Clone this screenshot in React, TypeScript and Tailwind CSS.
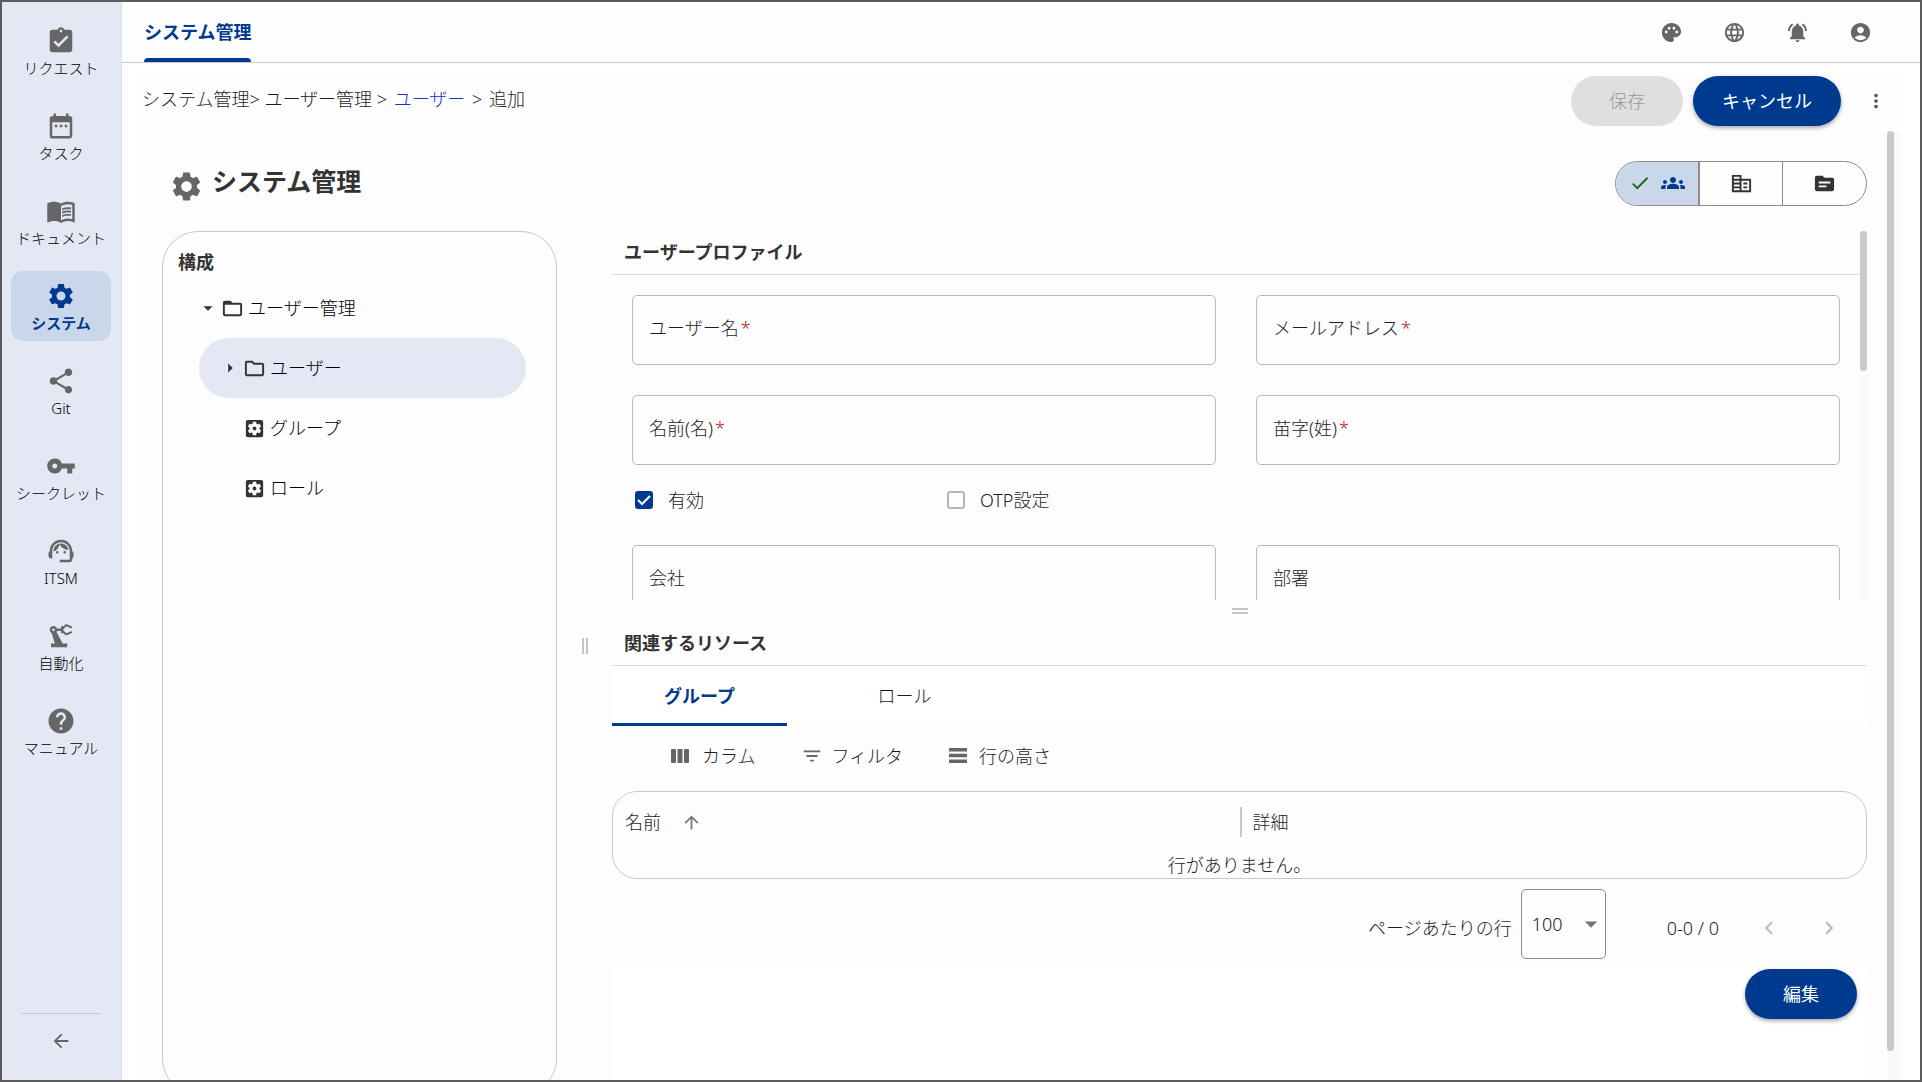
import { useState, type ComponentType, type ReactNode } from "react";
import {
  MdAccountCircle,
  MdArrowBack,
  MdArrowDropDown,
  MdArrowRight,
  MdArrowUpward,
  MdAssignmentTurnedIn,
  MdCheck,
  MdChevronLeft,
  MdChevronRight,
  MdCorporateFare,
  MdDateRange,
  MdFilterList,
  MdFolderOpen,
  MdGroups,
  MdHelp,
  MdLanguage,
  MdMenuBook,
  MdMoreVert,
  MdNotificationsActive,
  MdOutlineFolder,
  MdPalette,
  MdPrecisionManufacturing,
  MdSettings,
  MdSettingsApplications,
  MdShare,
  MdSource,
  MdSupportAgent,
  MdVpnKey,
} from "react-icons/md";

type Icon = ComponentType<{ size?: number; className?: string }>;

const navItems: { label: string; icon: Icon; active?: boolean }[] = [
  { label: "リクエスト", icon: MdAssignmentTurnedIn },
  { label: "タスク", icon: MdDateRange },
  { label: "ドキュメント", icon: MdMenuBook },
  { label: "システム", icon: MdSettings, active: true },
  { label: "Git", icon: MdShare },
  { label: "シークレット", icon: MdVpnKey },
  { label: "ITSM", icon: MdSupportAgent },
  { label: "自動化", icon: MdPrecisionManufacturing },
  { label: "マニュアル", icon: MdHelp },
];

function Sidebar() {
  return (
    <nav className="flex w-30 shrink-0 flex-col items-center border-r border-[#dcdde2] bg-[#e4e8f4] pt-3.5 pr-px">
      <div className="flex flex-col gap-[15px]">
        {navItems.map(({ label, icon: IconC, active }) => (
          <a
            key={label}
            href="#"
            className={
              active
                ? "flex h-[70px] w-[100px] flex-col items-center rounded-xl bg-[#cad7ea] pt-2.5 font-bold text-[#003a8f]"
                : "flex h-[70px] w-[100px] flex-col items-center pt-2.5 text-black"
            }
          >
            <IconC size={30} className={active ? "shrink-0" : "shrink-0 text-[#666]"} />
            <span className="text-[15px] leading-6 whitespace-nowrap">{label}</span>
          </a>
        ))}
      </div>
      <div className="mt-auto flex w-20 justify-center border-t border-[#c6cad5] pt-4 pb-7">
        <button aria-label="折りたたむ" className="text-[#666]">
          <MdArrowBack size={22} />
        </button>
      </div>
    </nav>
  );
}

function Header() {
  const icons: [string, Icon][] = [
    ["テーマ", MdPalette],
    ["言語", MdLanguage],
    ["通知", MdNotificationsActive],
    ["アカウント", MdAccountCircle],
  ];
  return (
    <header className="flex h-[61px] shrink-0 items-stretch justify-between border-b border-[#c8c8c8] bg-[#fdfdfd] pr-12 pl-[22px]">
      <a href="#" className="flex flex-col text-lg font-bold text-[#003a8f]">
        <span className="flex grow items-center pt-1">システム管理</span>
        <span className="h-1 rounded-t-sm bg-[#003a8f]" />
      </a>
      <div className="flex items-center gap-10 text-[#666]">
        {icons.map(([name, IconC]) => (
          <button key={name} aria-label={name}>
            <IconC size={23} />
          </button>
        ))}
      </div>
    </header>
  );
}

function PrimaryButton({ children, className }: { children: ReactNode; className: string }) {
  return (
    <button
      className={`h-[50px] rounded-full bg-[#003a8f] text-lg font-normal text-white shadow-[0_2px_4px_rgba(0,0,0,0.35)] ${className}`}
    >
      {children}
    </button>
  );
}

function ActionBar() {
  return (
    <div className="flex h-[54px] shrink-0 items-center justify-between bg-[#fdfdfd] pr-3.5">
      <nav aria-label="breadcrumb" className="flex items-center gap-0.5 pb-1 text-lg whitespace-pre text-[#1c1c1c]">
        <span>システム管理&gt; ユーザー管理 &gt; </span>
        <a href="#" className="text-[#1a30c8]">
          ユーザー
        </a>
        <span> &gt; </span>
        <span>追加</span>
      </nav>
      <div className="flex items-center">
        <button disabled className="h-[50px] w-28 rounded-full bg-[#dfdfdf] text-lg text-[#999]">
          保存
        </button>
        <PrimaryButton className="ml-2.5 w-37">キャンセル</PrimaryButton>
        <button aria-label="その他" className="ml-6 text-[#555]">
          <MdMoreVert size={22} />
        </button>
      </div>
    </div>
  );
}

function ViewToggle() {
  return (
    <div className="flex h-[45px] overflow-hidden rounded-full border border-[#8c8c8c] text-[#333]">
      <button
        aria-label="グループ表示"
        aria-pressed="true"
        className="flex w-[84px] items-center justify-center gap-2.5 border-r-2 border-[#8c8c8c] bg-[#cad7ea]"
      >
        <MdCheck size={22} className="text-[#1f6b0a]" />
        <MdGroups size={24} className="text-[#003a8f]" />
      </button>
      <button aria-label="組織表示" className="flex w-[82px] items-center justify-center">
        <MdCorporateFare size={23} />
      </button>
      <button
        aria-label="リソース表示"
        className="flex w-[84px] items-center justify-center border-l border-[#8c8c8c]"
      >
        <MdSource size={23} />
      </button>
    </div>
  );
}

function TreeItem({
  label,
  icon: IconC,
  arrow: Arrow,
  nested,
  selected,
}: {
  label: string;
  icon: Icon;
  arrow?: Icon;
  nested?: boolean;
  selected?: boolean;
}) {
  return (
    <button
      className={`flex h-[60px] w-full items-center rounded-full text-lg text-black ${nested ? "pl-[22px]" : ""} ${selected ? "bg-[#e4e8f4]" : ""}`}
    >
      <span className="flex w-[18px] justify-center text-[#333]">
        {Arrow && <Arrow size={22} className="shrink-0" />}
      </span>
      <IconC size={23} className="mx-1 shrink-0 text-[#333]" />
      <span>{label}</span>
    </button>
  );
}

function TreePanel() {
  return (
    <aside className="h-[864px] w-[395px] shrink-0 rounded-[36px] border border-[#c8c8c8] pt-3.5 pr-[30px]">
      <h2 className="pl-[15px] text-lg leading-8 font-bold text-[#333]">構成</h2>
      <ul className="pl-9">
        <li>
          <TreeItem label="ユーザー管理" icon={MdFolderOpen} arrow={MdArrowDropDown} />
          <ul>
            <li>
              <TreeItem label="ユーザー" icon={MdOutlineFolder} arrow={MdArrowRight} nested selected />
            </li>
            <li>
              <TreeItem label="グループ" icon={MdSettingsApplications} nested />
            </li>
            <li>
              <TreeItem label="ロール" icon={MdSettingsApplications} nested />
            </li>
          </ul>
        </li>
      </ul>
    </aside>
  );
}

function Field({ id, label, required }: { id: string; label: string; required?: boolean }) {
  return (
    <div className="relative">
      <input id={id} required={required} className="h-[70px] w-full rounded-[5px] border border-[#b8b8b8] px-4 text-lg" />
      <label htmlFor={id} className="absolute top-[19px] left-[17px] text-lg leading-7 text-[#1c1c1c]">
        {label}
        {required && <span className="ml-0.5 text-[#b71c1c]">*</span>}
      </label>
    </div>
  );
}

function Checkbox({ id, label, defaultChecked }: { id: string; label: string; defaultChecked?: boolean }) {
  return (
    <label htmlFor={id} className="flex items-center gap-[15px] text-lg text-[#1c1c1c]">
      <span className="grid">
        <input
          id={id}
          type="checkbox"
          defaultChecked={defaultChecked}
          className="peer col-start-1 row-start-1 size-[18px] appearance-none rounded-[3px] border-2 border-[#b5b5b5] checked:border-[#003a8f] checked:bg-[#003a8f]"
        />
        <svg
          viewBox="0 0 18 18"
          className="pointer-events-none invisible col-start-1 row-start-1 size-[18px] peer-checked:visible"
          fill="none"
          stroke="#fff"
          strokeWidth="2"
        >
          <path d="M3 9l4 4 8-8" />
        </svg>
      </span>
      {label}
    </label>
  );
}

function ProfileForm() {
  return (
    <section className="flex h-[369px] overflow-hidden">
      <div className="min-w-0 grow">
        <h2 className="flex h-11 items-center border-b border-[#dcdcdc] pb-0.5 pl-3 text-lg font-bold text-[#333]">
          ユーザープロファイル
        </h2>
        <div className="grid grid-cols-2 gap-x-10 px-5 pt-5">
          <Field id="username" label="ユーザー名" required />
          <Field id="email" label="メールアドレス" required />
          <div className="mt-[30px]">
            <Field id="given-name" label="名前(名)" required />
          </div>
          <div className="mt-[30px]">
            <Field id="family-name" label="苗字(姓)" required />
          </div>
          <div className="col-span-2 grid h-20 grid-cols-4 pb-[10px]">
            <div className="flex items-center pl-[3px]">
              <Checkbox id="enabled" label="有効" defaultChecked />
            </div>
            <div className="flex items-center pl-[13px]">
              <Checkbox id="otp" label="OTP設定" />
            </div>
          </div>
          <Field id="company" label="会社" />
          <Field id="department" label="部署" />
        </div>
      </div>
      <div className="w-[7px] shrink-0 bg-[#fafafa]">
        <div className="h-[140px] rounded-full bg-[#c9c9c9]" />
      </div>
    </section>
  );
}

function ColumnsIcon() {
  return (
    <svg viewBox="0 0 18 14" className="h-3.5 w-[18px]" fill="#666">
      <rect width="5" height="14" rx="1" />
      <rect x="6.5" width="5" height="14" rx="1" />
      <rect x="13" width="5" height="14" rx="1" />
    </svg>
  );
}

function RowsIcon() {
  return (
    <svg viewBox="0 0 18 15" className="h-[15px] w-[18px]" fill="#666">
      <rect width="18" height="3.5" />
      <rect y="5.75" width="18" height="3.5" />
      <rect y="11.5" width="18" height="3.5" />
    </svg>
  );
}

function ResourceTable() {
  return (
    <div className="overflow-hidden rounded-[25px] border border-[#c8c8c8]">
      <table className="w-full table-fixed text-lg text-[#1c1c1c]">
        <thead>
          <tr className="h-[60px]">
            <th className="px-3 text-left font-light" aria-sort="ascending">
              <span className="flex items-center gap-5">
                名前
                <MdArrowUpward size={21} className="text-[#777]" />
              </span>
            </th>
            <th className="text-left font-light">
              <span className="flex h-[30px] items-center border-l-2 border-[#c8c8c8] pl-[11px]">詳細</span>
            </th>
          </tr>
        </thead>
        <tbody>
          <tr>
            <td colSpan={2} className="h-[26px] p-0 text-center leading-[26px]">
              行がありません。
            </td>
          </tr>
        </tbody>
      </table>
    </div>
  );
}

function Pagination() {
  return (
    <div className="flex items-center justify-end pt-2.5 pr-[25px] pb-2.5 text-lg text-[#1c1c1c]">
      <label htmlFor="page-size" className="pt-2">
        ページあたりの行
      </label>
      <div className="relative ml-[9px]">
        <select
          id="page-size"
          defaultValue="100"
          className="h-[70px] w-[85px] appearance-none rounded-[5px] border border-[#8c8c8c] pl-2.5"
        >
          <option>25</option>
          <option>50</option>
          <option>100</option>
        </select>
        <MdArrowDropDown size={30} className="pointer-events-none absolute top-5 right-0 text-[#757575]" />
      </div>
      <span className="ml-[61px] pt-2">0-0 / 0</span>
      <button aria-label="前のページ" disabled className="ml-[37px] pt-2 text-[#bdbdbd]">
        <MdChevronLeft size={26} />
      </button>
      <button aria-label="次のページ" disabled className="ml-[34px] pt-2 text-[#bdbdbd]">
        <MdChevronRight size={26} />
      </button>
    </div>
  );
}

function Resources() {
  const [tab, setTab] = useState(0);
  return (
    <section className="flex grow flex-col">
      <h2 className="flex h-[45px] items-center border-b border-[#dcdcdc] pl-3 text-lg font-bold text-[#333]">
        関連するリソース
      </h2>
      <div role="tablist" className="flex h-15 gap-[30px] bg-white text-lg">
        {["グループ", "ロール"].map((name, i) => (
          <button
            key={name}
            role="tab"
            aria-selected={tab === i}
            onClick={() => setTab(i)}
            className={
              tab === i
                ? "w-[175px] border-b-3 border-[#003a8f] pt-0.5 font-bold text-[#003a8f]"
                : "w-[175px] border-b-3 border-transparent pt-0.5 text-[#1c1c1c]"
            }
          >
            {name}
          </button>
        ))}
      </div>
      <div className="flex h-[65px] items-center gap-[46px] pb-1.5 pl-[59px] text-lg text-[#1c1c1c]">
        <button className="flex items-center gap-[13px]">
          <ColumnsIcon />
          カラム
        </button>
        <button className="flex items-center gap-2">
          <MdFilterList size={22} className="text-[#666]" />
          フィルタ
        </button>
        <button className="flex items-center gap-3">
          <RowsIcon />
          行の高さ
        </button>
      </div>
      <ResourceTable />
      <Pagination />
      <div className="flex grow items-start justify-end bg-white pr-2.5">
        <PrimaryButton className="w-28">編集</PrimaryButton>
      </div>
    </section>
  );
}

export default function App() {
  return (
    <div className="flex h-screen overflow-hidden border-2 border-[#5c5c5c] bg-white font-['Noto_Sans','Noto_Sans_CJK_JP',sans-serif] font-light">
      <Sidebar />
      <div className="flex min-w-0 grow flex-col">
        <Header />
        <main className="flex min-h-0 grow flex-col pt-[11px] pr-[19px] pl-5">
          <ActionBar />
          <div className="mt-[3px] flex min-h-0 grow overflow-hidden bg-[#fdfdfd]">
            <div className="flex min-w-0 grow flex-col pr-5 pl-5">
              <div className="flex h-[100px] shrink-0 items-center justify-between pt-1">
                <h1 className="flex items-center gap-2 pb-0.5 pl-[7px] text-[25px] font-bold text-[#333]">
                  <MdSettings size={35} className="mt-2 text-[#666]" />
                  システム管理
                </h1>
                <ViewToggle />
              </div>
              <div className="flex min-h-0 grow">
                <TreePanel />
                <div className="flex w-[55px] shrink-0 items-center justify-center pb-5">
                  <div className="h-4 w-1.5 border-x-2 border-[#c4c4c4]" />
                </div>
                <div className="flex min-w-0 grow flex-col">
                  <ProfileForm />
                  <div className="flex h-[21px] shrink-0 justify-center pt-2">
                    <div className="h-1.5 w-4 border-y-2 border-[#c4c4c4]" />
                  </div>
                  <Resources />
                </div>
              </div>
            </div>
            <div className="w-3.5 shrink-0 bg-[#fafafa]">
              <div className="h-[920px] w-[7px] rounded-full bg-[#c9c9c9]" />
            </div>
          </div>
        </main>
      </div>
    </div>
  );
}
